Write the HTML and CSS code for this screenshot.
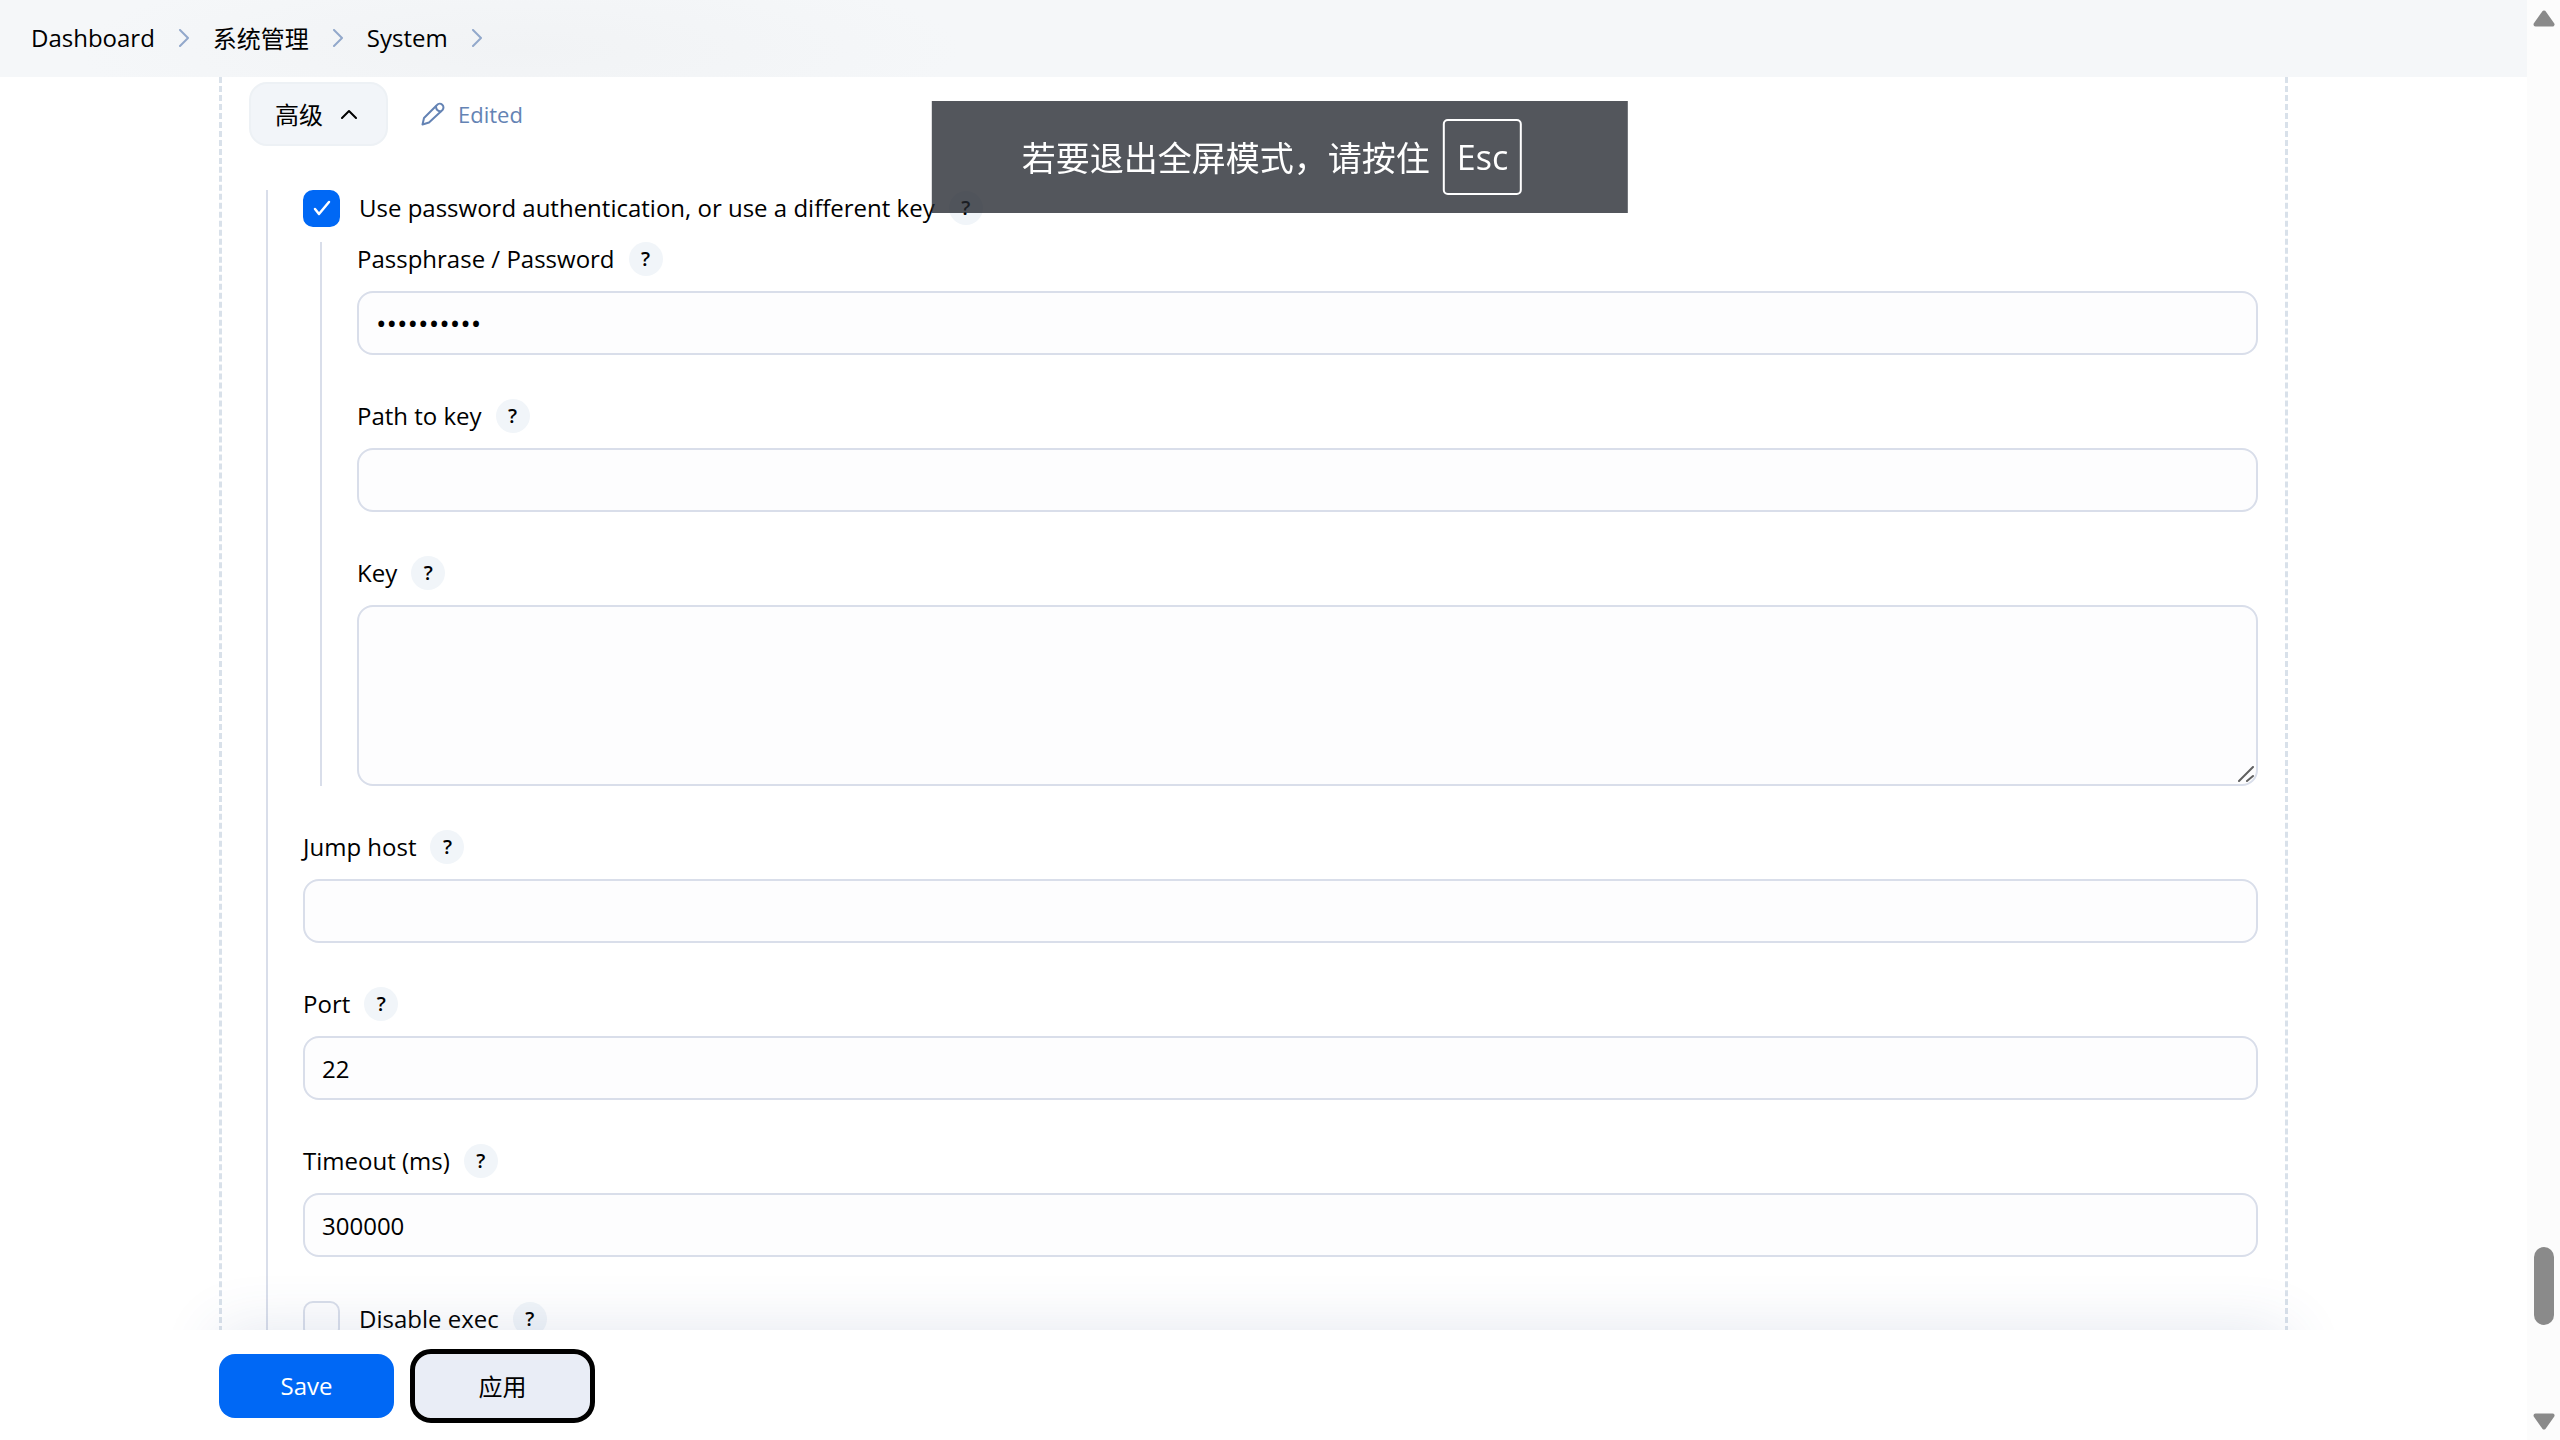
FILE: index.html
```html
<!DOCTYPE html>
<html lang="zh-CN">
<head>
  <meta charset="UTF-8" />
  <meta name="viewport" content="width=device-width, initial-scale=1" />
  <title>System</title>
  <link rel="stylesheet" href="styles.css">
</head>
<body>
  <div class="app">
    <header class="topbar">
      <nav class="breadcrumb">
        <a href="#">Dashboard</a>
        <svg class="crumb-arrow" viewBox="0 0 12 18"><path d="M2 1l8 8-8 8" /></svg>
        <a href="#" class="zh">系统管理</a>
        <svg class="crumb-arrow" viewBox="0 0 12 18"><path d="M2 1l8 8-8 8" /></svg>
        <a href="#">System</a>
        <svg class="crumb-arrow" viewBox="0 0 12 18"><path d="M2 1l8 8-8 8" /></svg>
      </nav>
    </header>

    <main class="content">
      <form class="panel" id="settings">
        <div class="panel-head">
          <button type="button" class="toggle zh">高级
            <svg class="caret" viewBox="0 0 16 10"><path d="M1 9l7-7 7 7" /></svg>
          </button>
          <span class="edited">
            <svg class="pencil" viewBox="0 0 24 24"><path d="M1.500 22.500l1.500-6.500L16 3a3.700 3.700 0 0 1 5.500 5L8 20.500z" /><path d="M15 4.500c0 3 2 4.500 4.500 5" /></svg>
            Edited
          </span>
        </div>

        <div class="group">
          <div class="check-row">
            <input type="checkbox" id="use-password" class="check" checked />
            <label for="use-password">Use password authentication, or use a different key</label>
            <button type="button" class="help">?</button>
          </div>

          <div class="group nested">
            <div class="field">
              <div class="field-head">
                <label for="password">Passphrase / Password</label>
                <button type="button" class="help">?</button>
              </div>
              <input type="password" id="password" class="input" value="0123456789" />
            </div>
            <div class="field">
              <div class="field-head">
                <label for="key-path">Path to key</label>
                <button type="button" class="help">?</button>
              </div>
              <input type="text" id="key-path" class="input" />
            </div>
            <div class="field">
              <div class="field-head">
                <label for="key">Key</label>
                <button type="button" class="help">?</button>
              </div>
              <div class="textarea-wrap">
                <textarea id="key" class="input textarea"></textarea>
                <svg class="grip" viewBox="0 0 16 16"><path d="M1 15L15 1M9 15l6-5" /></svg>
              </div>
            </div>
          </div>

          <div class="field">
            <div class="field-head">
              <label for="jump-host">Jump host</label>
              <button type="button" class="help">?</button>
            </div>
            <input type="text" id="jump-host" class="input" />
          </div>
          <div class="field">
            <div class="field-head">
              <label for="port">Port</label>
              <button type="button" class="help">?</button>
            </div>
            <input type="text" id="port" class="input" value="22" />
          </div>
          <div class="field">
            <div class="field-head">
              <label for="timeout">Timeout (ms)</label>
              <button type="button" class="help">?</button>
            </div>
            <input type="text" id="timeout" class="input" value="300000" />
          </div>
          <div class="check-row">
            <input type="checkbox" id="disable-exec" class="check" />
            <label for="disable-exec">Disable exec</label>
            <button type="button" class="help">?</button>
          </div>
        </div>
      </form>
    </main>

    <footer class="actions">
      <button type="submit" form="settings" class="btn btn-primary">Save</button>
      <button type="button" class="btn btn-apply zh">应用</button>
    </footer>
  </div>

  <div class="scrollbar">
    <svg class="scroll-arrow" viewBox="0 0 22 17"><path d="M11 2.500L19.500 14.500H2.500z" /></svg>
    <div class="scroll-track"><div class="scroll-thumb"></div></div>
    <svg class="scroll-arrow" viewBox="0 0 22 17"><path d="M11 14.500L19.500 2.500H2.500z" /></svg>
  </div>

  <div class="toast">若要退出全屏模式，请按住<kbd>Esc</kbd></div>
</body>
</html>
```
FILE: styles.css
```css
* {
  box-sizing: border-box;
}
body {
  display: flex;
  height: 100vh;
  margin: 0;
  overflow: hidden;
  background: #fff;
  color: #000;
  font-family: "Open Sans", "Noto Sans CJK SC", sans-serif;
  font-size: 24px;
  line-height: 34px;
}
button, input, textarea {
  font: inherit;
  color: inherit;
}
button {
  cursor: pointer;
}
svg {
  fill: none;
  stroke-linecap: round;
  stroke-linejoin: round;
}
.zh {
  font-family: "Noto Sans CJK SC", sans-serif;
}
.app {
  display: flex;
  flex: 1;
  flex-direction: column;
  min-width: 0;
}

/* Top bar */
.topbar {
  padding: 21px 31px;
  height: 77px;
  flex: none;
  background: radial-gradient(ellipse 440px 90px at 520px 50px, #f1f3f5, #f5f7f9);
}
.breadcrumb {
  display: flex;
  align-items: center;
  gap: 23px;
}
.breadcrumb a {
  color: #000;
  text-decoration: none;
}
.crumb-arrow {
  width: 12px;
  height: 18px;
  stroke: #92a8cb;
  stroke-width: 2;
}

/* Content */
.content {
  position: relative;
  flex: 1;
  min-height: 0;
  overflow: hidden;
}
/* soft shade cast upwards by the action bar */
.content::after {
  content: "";
  position: absolute;
  top: 100%;
  left: 219px;
  right: 239px;
  height: 100px;
  box-shadow: 0 0 60px rgba(60, 85, 140, 0.14);
  pointer-events: none;
}
.panel {
  margin: 0 239px 0 219px;
  padding: 5px 27px 40px;
  border: 3px dashed #d9e1ea;
  border-width: 0 3px;
}
.panel-head {
  display: flex;
  align-items: center;
  gap: 33px;
  margin-bottom: 44px;
}
.toggle {
  display: flex;
  align-items: center;
  gap: 18px;
  height: 64px;
  padding: 0 29px 0 24px;
  border: 2px solid #edf1f5;
  border-radius: 18px;
  background: #f2f5f9;
}
.caret {
  width: 16px;
  height: 10px;
  stroke: #000;
  stroke-width: 2;
}
.edited {
  display: flex;
  align-items: center;
  gap: 13px;
  color: #6483b4;
  font-size: 22px;
}
.pencil {
  width: 24px;
  height: 24px;
  stroke: #6483b4;
  stroke-width: 2;
}
.group {
  display: flex;
  flex-direction: column;
  gap: 44px;
  margin-left: 17px;
  padding-left: 35px;
  border-left: 2px solid #d9deea;
}
.nested {
  margin-top: -28px;
}

.check-row {
  display: flex;
  align-items: center;
  height: 36px;
}
.check {
  width: 37px;
  height: 37px;
  margin: 0 19px 0 0;
  appearance: none;
  border: 2px solid #d9deea;
  border-radius: 10px;
  background: #fdfdfe;
}
.check:checked {
  border-color: #0068f5;
  background: #0068f5 url("data:image/svg+xml,%3Csvg xmlns='http://www.w3.org/2000/svg' viewBox='0 0 18 16' fill='none' stroke='white' stroke-width='2.500' stroke-linecap='round' stroke-linejoin='round'%3E%3Cpath d='M2 9l4 5L16 2'/%3E%3C/svg%3E") center / 18px 16px no-repeat;
}
.help {
  width: 34px;
  height: 34px;
  margin-left: 14px;
  padding: 0;
  border: 0;
  border-radius: 50%;
  background: #f1f5f9;
  font-size: 20px;
  font-weight: 600;
  line-height: 34px;
}
.field-head {
  display: flex;
  align-items: center;
  height: 34px;
  margin-bottom: 15px;
}
.input {
  display: block;
  width: 100%;
  height: 64px;
  padding: 0 17px;
  border: 2px solid #d9deea;
  border-radius: 16px;
  outline: none;
  background: #fdfdfe;
}
.input[type="password"] {
  font-size: 28px;
}
.textarea-wrap {
  position: relative;
}
.textarea {
  height: 181px;
  padding: 12px 17px;
  resize: none;
}
.grip {
  position: absolute;
  right: 4px;
  bottom: 4px;
  width: 16px;
  height: 16px;
  stroke: #606060;
  stroke-width: 2;
}

/* Bottom actions */
.actions {
  display: flex;
  flex: none;
  gap: 21px;
  padding: 24px 219px 22px;
}
.btn {
  width: 175px;
  height: 64px;
  border: 0;
  border-radius: 16px;
}
.btn-primary {
  background: #0068f5;
  color: #fff;
}
.btn-apply {
  background: #e9edf6;
  outline: 5px solid #000;
}

/* Page scrollbar */
.scrollbar {
  display: flex;
  flex-direction: column;
  align-items: center;
  width: 33px;
  padding: 10px 0;
  background: #fcfcfc;
}
.scroll-arrow {
  width: 22px;
  height: 17px;
  fill: #8a8a8a;
  stroke: #8a8a8a;
  stroke-width: 4;
}
.scroll-track {
  display: flex;
  flex: 1;
  flex-direction: column;
  justify-content: flex-end;
  padding-bottom: 88px;
}
.scroll-thumb {
  width: 20px;
  height: 78px;
  border-radius: 10px;
  background: #8a8a8a;
}

/* Fullscreen hint */
.toast {
  position: fixed;
  top: 101px;
  left: 50%;
  display: flex;
  align-items: center;
  gap: 13px;
  height: 112px;
  padding: 0 106px 0 90px;
  transform: translateX(-50%);
  background: rgba(34, 39, 46, 0.78);
  color: #fff;
  font-family: "Noto Sans CJK SC", sans-serif;
  font-size: 34px;
  white-space: nowrap;
}
.toast kbd {
  padding: 19px 12px;
  border: 2px solid #fff;
  border-radius: 5px;
  font-family: "Open Sans", sans-serif;
  font-size: 34px;
}
```
